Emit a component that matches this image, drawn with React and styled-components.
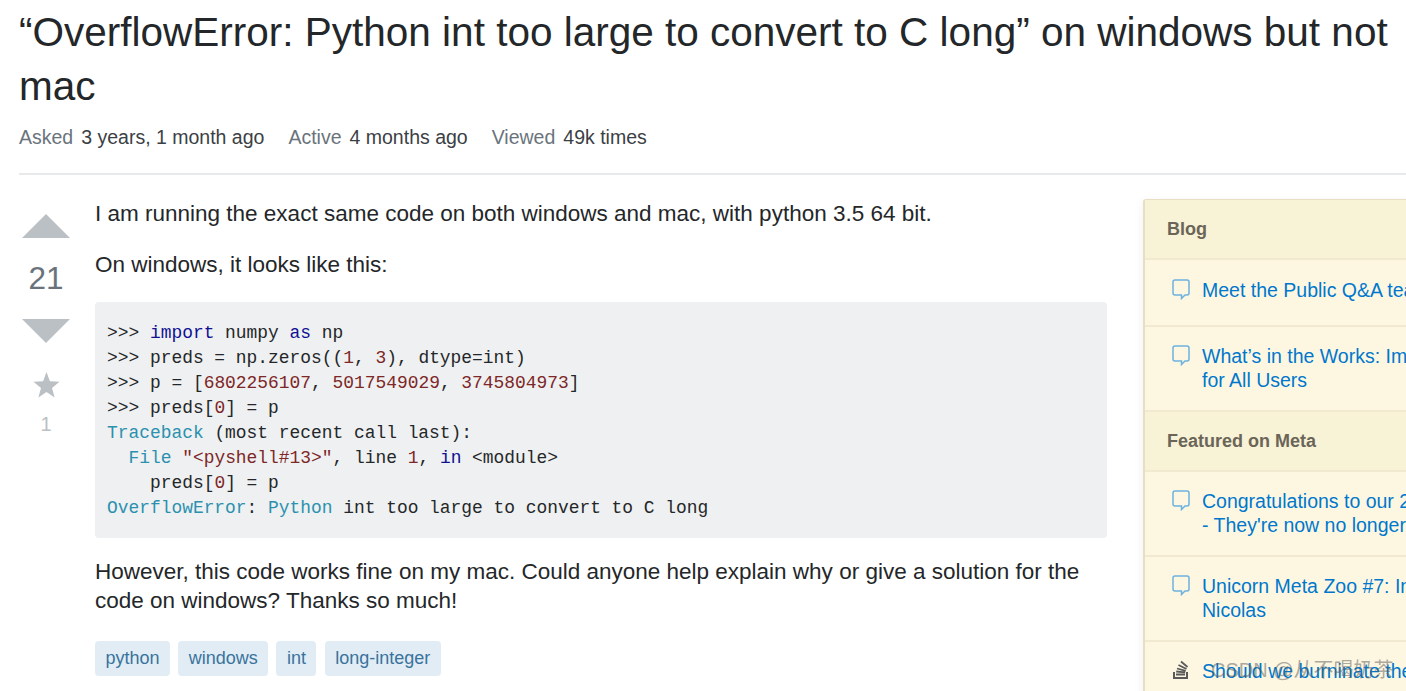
import styled, { createGlobalStyle } from "styled-components";

const GlobalStyle = createGlobalStyle`
  html, body {
    margin: 0;
    padding: 0;
    background: #fff;
    overflow: hidden;
  }
  body {
    font-family: "Liberation Sans", Arial, sans-serif;
  }
`;

const Page = styled.div`
  width: 1406px;
  height: 691px;
  overflow: hidden;
  position: relative;
  padding-left: 19px;
  box-sizing: border-box;
`;
const Title = styled.h1`
  margin: 0;
  padding-top: 5px;
  width: 1380px;
  font-size: 40.5px;
  font-weight: 400;
  line-height: 54px;
  color: #242729;
`;
const Stats = styled.div`
  display: flex;
  gap: 24px;
  margin-top: 13px;
  height: 23px;
  padding-bottom: 24px;
  border-bottom: 2px solid #e8e9ea;
  width: 1387px;
  font-size: 19.5px;
  line-height: 23px;
`;
const Stat = styled.span`
  color: #6a737c;
  b {
    font-weight: 400;
    color: #3b4045;
    margin-left: 8px;
  }
`;
const Main = styled.div`
  display: flex;
  align-items: flex-start;
`;
const VoteColumn = styled.div`
  flex: none;
  width: 54px;
  margin-right: 22px;
  padding-top: 39px;
  display: flex;
  flex-direction: column;
  align-items: center;
`;
const Arrow = styled.div`
  width: 0;
  height: 0;
  border-left: 24px solid transparent;
  border-right: 24px solid transparent;
  border-${(p) => (p.$down ? "top" : "bottom")}: 24px solid #bbc0c4;
`;
const Score = styled.div`
  font-size: 31.5px;
  line-height: 38px;
  color: #6a737c;
  margin: 21px 0 22px;
`;
const StarIcon = styled.svg`
  display: block;
  width: 27px;
  height: 26px;
  margin-top: 29px;
  fill: #bbc0c4;
`;
const FavCount = styled.div`
  font-size: 20px;
  line-height: 24px;
  color: #bbc0c4;
  margin-top: 14px;
`;
const Post = styled.div`
  flex: none;
  width: 1012px;
  padding-top: 24px;
  margin-right: 36px;
`;
const Para = styled.p`
  margin: 0 0 22px;
  font-size: 22.5px;
  line-height: 29px;
  color: #242729;
`;
const CodeBlock = styled.pre`
  margin: 23px 0 19px;
  padding: 19px 12px 17px;
  background: #eff0f1;
  border-radius: 4px;
  font-family: "Liberation Mono", "DejaVu Sans Mono", monospace;
  font-size: 17.9px;
  line-height: 25px;
  color: #242729;
  overflow: hidden;
`;
const Keyword = styled.span`
  color: #101094;
`;
const Lit = styled.span`
  color: #7d2727;
`;
const TypeName = styled.span`
  color: #2b91af;
`;
const Tags = styled.div`
  display: flex;
  gap: 8.2px;
  margin-top: 26px;
`;
const Tag = styled.span`
  padding: 0 10.5px;
  height: 35px;
  line-height: 35px;
  border-radius: 4px;
  background: #e1ecf4;
  color: #39739d;
  font-size: 18px;
`;
const Sidebar = styled.aside`
  flex: none;
  width: 450px;
  margin-top: 24px;
  box-sizing: border-box;
  border: 1px solid #e6dfc3;
  border-left-width: 2px;
  border-radius: 3px;
  background: #fdf7e2;
  box-shadow: 0 3px 12px rgba(0, 0, 0, 0.06);
`;
const SideHead = styled.div`
  height: 58px;
  line-height: 58px;
  padding-left: 22px;
  background: #f8f2d6;
  border-bottom: 2px solid #f1ead0;
  color: #6a6558;
  font-size: 18px;
  font-weight: 700;
`;
const SideItem = styled.a`
  display: flex;
  gap: 12px;
  padding: ${(p) => (p.$single ? "18px 0 23px 27px" : "17px 0 18px 27px")};
  border-bottom: 2px solid #f1ead0;
  color: #0077cc;
  font-size: 19.5px;
  line-height: 24px;
`;
const SideIcon = styled.svg`
  flex: none;
  width: 18px;
  height: 22px;
  margin-top: 1px;
`;
const SideText = styled.span`
  white-space: nowrap;
`;
const Watermark = styled.div`
  position: absolute;
  left: 1211px;
  top: 657px;
  font-size: 20px;
  line-height: 26px;
  color: rgba(90, 90, 90, 0.5);
  font-family: "Liberation Sans", "Noto Sans CJK SC", sans-serif;
  white-space: nowrap;
`;

function Bubble() {
  return (
    <SideIcon viewBox="0 0 18 22">
      <path
        d="M3 1h12a2 2 0 0 1 2 2v11a2 2 0 0 1-2 2h-2l-3.500 3.500V16H3a2 2 0 0 1-2-2V3a2 2 0 0 1 2-2z"
        fill="none"
        stroke="#6cb2e0"
        strokeWidth="1.5"
      />
    </SideIcon>
  );
}

function StackIcon() {
  return (
    <SideIcon viewBox="0 0 18 22">
      <path d="M1 12h2v5h11v-5h2v7H1z" fill="#5a5a5a" />
      <path
        d="M4 14.500h9M4.200 11.500l9 .8M5 8.500l8.700 2.300M6.500 5l8 4M9 1.500l6.500 5.500"
        stroke="#5a5a5a"
        strokeWidth="1.800"
        fill="none"
      />
    </SideIcon>
  );
}

export default function App() {
  return (
    <>
      <GlobalStyle />
      <Page>
        <Title>“OverflowError: Python int too large to convert to C long” on windows but not mac</Title>
        <Stats>
          <Stat>Asked<b>3 years, 1 month ago</b></Stat>
          <Stat>Active<b>4 months ago</b></Stat>
          <Stat>Viewed<b>49k times</b></Stat>
        </Stats>
        <Main>
          <VoteColumn>
            <Arrow />
            <Score>21</Score>
            <Arrow $down />
            <StarIcon viewBox="0 0 27 26">
              <path d="M13.500 0l3.400 9.300 9.600.4-7.500 6.200 2.600 9.600-8.100-5.500-8.100 5.500 2.600-9.600L.5 9.700l9.600-.4z" />
            </StarIcon>
            <FavCount>1</FavCount>
          </VoteColumn>
          <Post>
            <Para>I am running the exact same code on both windows and mac, with python 3.5 64 bit.</Para>
            <Para>On windows, it looks like this:</Para>
            <CodeBlock>
              {">>> "}<Keyword>import</Keyword>{" numpy "}<Keyword>as</Keyword>{" np\n"}
              {">>> preds = np.zeros(("}<Lit>1</Lit>{", "}<Lit>3</Lit>{"), dtype=int)\n"}
              {">>> p = ["}<Lit>6802256107</Lit>{", "}<Lit>5017549029</Lit>{", "}<Lit>3745804973</Lit>{"]\n"}
              {">>> preds["}<Lit>0</Lit>{"] = p\n"}
              <TypeName>Traceback</TypeName>{" (most recent call last):\n"}
              {"  "}<TypeName>File</TypeName>{" "}<Lit>"&lt;pyshell#13&gt;"</Lit>{", line "}<Lit>1</Lit>{", "}<Keyword>in</Keyword>{" <module>\n"}
              {"    preds["}<Lit>0</Lit>{"] = p\n"}
              <TypeName>OverflowError</TypeName>{": "}<TypeName>Python</TypeName>{" int too large to convert to C long"}
            </CodeBlock>
            <Para>However, this code works fine on my mac. Could anyone help explain why or give a solution for the code on windows? Thanks so much!</Para>
            <Tags>
              <Tag>python</Tag>
              <Tag>windows</Tag>
              <Tag>int</Tag>
              <Tag>long-integer</Tag>
            </Tags>
          </Post>
          <Sidebar>
            <SideHead>Blog</SideHead>
            <SideItem $single><Bubble /><SideText>Meet the Public Q&amp;A team</SideText></SideItem>
            <SideItem><Bubble /><SideText>What’s in the Works: Improvements<br />for All Users</SideText></SideItem>
            <SideHead>Featured on Meta</SideHead>
            <SideItem><Bubble /><SideText>Congratulations to our 29 oldest beta sites<br />- They're now no longer beta!</SideText></SideItem>
            <SideItem><Bubble /><SideText>Unicorn Meta Zoo #7: Interview with<br />Nicolas</SideText></SideItem>
            <SideItem><StackIcon /><SideText>Should we burninate the</SideText></SideItem>
          </Sidebar>
        </Main>
        <Watermark>CSDN @从不喝奶茶</Watermark>
      </Page>
    </>
  );
}
